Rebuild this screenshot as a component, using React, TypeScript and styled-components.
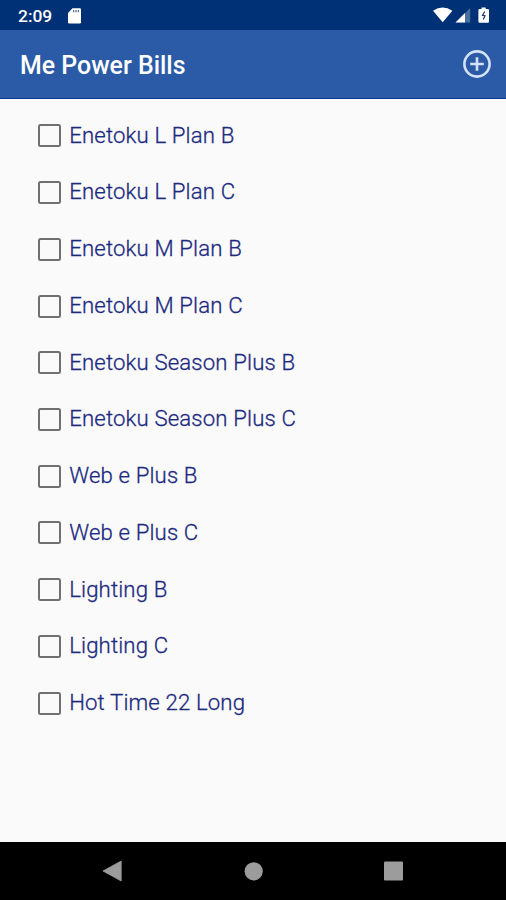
import React from 'react';
import styled, { createGlobalStyle } from 'styled-components';

const GlobalStyle = createGlobalStyle`
  html, body { margin: 0; padding: 0; background: #fafafa; }
  * { box-sizing: border-box; }
`;

const Screen = styled.div`
  display: flex;
  flex-direction: column;
  width: 506px;
  height: 900px;
  overflow: hidden;
  background: #fafafa;
  font-family: Roboto, 'Liberation Sans', sans-serif;
`;

const StatusBar = styled.header`
  display: flex;
  align-items: center;
  height: 30px;
  padding: 2px 16px 0 18px;
  background: #003075;
  color: #fff;
`;

const Clock = styled.span`
  width: 49px;
  font-size: 17.4px;
  font-weight: 500;
  line-height: 20px;
`;

const StatusIcons = styled.div`
  display: flex;
  align-items: center;
  margin-left: auto;
`;

const AppBar = styled.div`
  display: flex;
  align-items: center;
  justify-content: space-between;
  height: 69px;
  padding: 0 15px 0 20px;
  background: #2b5ba6;
  border-bottom: 1px solid #0c3a93;
`;

const Title = styled.h1`
  margin: 4px 0 0;
  color: #fff;
  font-size: 24.9px;
  font-weight: 500;
  line-height: 30px;
  white-space: nowrap;
`;

const AddButton = styled.button`
  display: flex;
  padding: 0;
  border: 0;
  background: none;
`;

const PlanList = styled.ul`
  flex: 1;
  margin: 0;
  padding: 8.6px 0 0 38px;
  list-style: none;
`;

const PlanRow = styled.li`
  display: flex;
  align-items: center;
  height: 56.72px;
`;

const CheckBox = styled.span`
  width: 23px;
  height: 23px;
  margin-right: 8.2px;
  border: 2px solid #707070;
  border-radius: 2.5px;
`;

const PlanName = styled.span`
  margin-top: -2.4px;
  color: #1c2a80;
  font-size: 22.2px;
  font-weight: 300;
  letter-spacing: 0.14px;
  line-height: 28px;
  white-space: nowrap;
  -webkit-text-stroke: 0.3px #1c2a80;
`;

const NavBar = styled.nav`
  display: flex;
  align-items: center;
  justify-content: space-between;
  height: 58px;
  padding: 1px 102px;
  background: #000;
`;

const plans = [
  'Enetoku L Plan B',
  'Enetoku L Plan C',
  'Enetoku M Plan B',
  'Enetoku M Plan C',
  'Enetoku Season Plus B',
  'Enetoku Season Plus C',
  'Web e Plus B',
  'Web e Plus C',
  'Lighting B',
  'Lighting C',
  'Hot Time 22 Long',
];

export default function App() {
  return (
    <Screen>
      <GlobalStyle />
      <StatusBar>
        <Clock>2:09</Clock>
        <svg width="15" height="17" viewBox="0 0 15 17">
          <path d="M5.5.3H12.8Q14 .3 14 1.500V14.300Q14 15.500 12.800 15.500H2.200Q1 15.500 1 14.300V5Z" fill="#fff" />
          <path d="M6.600 2V4.300M9 2V4.300M11.400 2V4.300" stroke="#536f9f" strokeWidth="1.300" />
        </svg>
        <StatusIcons>
          <svg width="57" height="18" viewBox="0 0 57 18">
            <path d="M0 3.800Q9.700-2.600 19.400 3.800L9.700 15.300Z" fill="#fff" />
            <path d="M37.200.9V15.500H22.500Z" fill="#48709f" />
            <path d="M32 6V15.500H22.500Z" fill="#fff" />
            <path d="M48.500 .4H52.700V1.900H54.800Q56 1.900 56 3.100V14.600Q56 15.800 54.800 15.800H46.600Q45.400 15.800 45.400 14.600V3.100Q45.400 1.900 46.600 1.900H48.500Z" fill="#fff" />
            <path d="M51.800 4.600L49.500 8.300L52 8.800L50.300 12.600" stroke="#15366f" strokeWidth="1.200" fill="none" />
          </svg>
        </StatusIcons>
      </StatusBar>
      <AppBar>
        <Title>Me Power Bills</Title>
        <AddButton aria-label="Add">
          <svg width="28" height="28" viewBox="0 0 28 28" fill="none" stroke="#d3e2f8" strokeWidth="2.600">
            <circle cx="14" cy="14" r="12.600" />
            <path d="M14 7.200V20.800M7.200 14H20.800" />
          </svg>
        </AddButton>
      </AppBar>
      <PlanList>
        {plans.map((plan) => (
          <PlanRow key={plan}>
            <CheckBox role="checkbox" aria-checked={false} aria-label={plan} />
            <PlanName>{plan}</PlanName>
          </PlanRow>
        ))}
      </PlanList>
      <NavBar>
        <svg width="20" height="22" viewBox="0 0 20 22">
          <path d="M19.200 1V21L1 11Z" fill="#9c9c9c" stroke="#9c9c9c" strokeWidth=".8" strokeLinejoin="round" />
        </svg>
        <svg width="20" height="20" viewBox="0 0 20 20">
          <circle cx="10.700" cy="10.300" r="9.100" fill="#9c9c9c" />
        </svg>
        <svg width="20" height="20" viewBox="0 0 20 20">
          <rect x="0" y=".5" width="19" height="19" rx="1" fill="#9c9c9c" />
        </svg>
      </NavBar>
    </Screen>
  );
}
